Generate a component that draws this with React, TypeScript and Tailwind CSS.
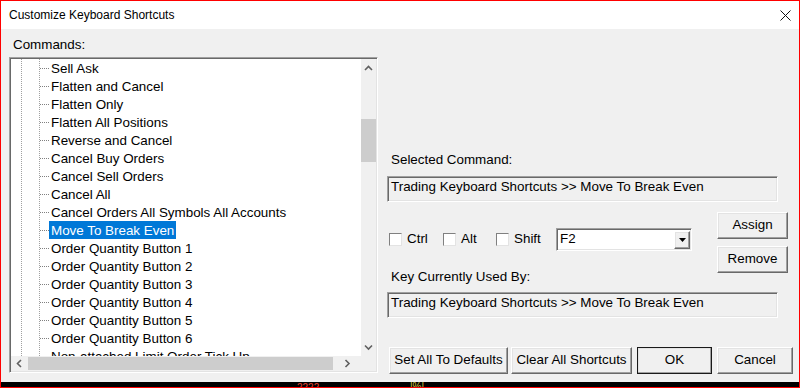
import React from "react";

const commands = [
  "Sell Ask",
  "Flatten and Cancel",
  "Flatten Only",
  "Flatten All Positions",
  "Reverse and Cancel",
  "Cancel Buy Orders",
  "Cancel Sell Orders",
  "Cancel All",
  "Cancel Orders All Symbols All Accounts",
  "Move To Break Even",
  "Order Quantity Button 1",
  "Order Quantity Button 2",
  "Order Quantity Button 3",
  "Order Quantity Button 4",
  "Order Quantity Button 5",
  "Order Quantity Button 6",
  "Non-attached Limit Order Tick Up",
];

const raised =
  "border border-t-white border-l-white border-r-[#696969] border-b-[#696969] shadow-[inset_-1px_-1px_0_#a0a0a0,inset_1px_1px_0_#e3e3e3] bg-[#f0f0f0]";
const sunken =
  "border border-t-[#a0a0a0] border-l-[#a0a0a0] border-r-white border-b-white shadow-[inset_1px_1px_0_#696969,inset_-1px_-1px_0_#e3e3e3]";

function Btn({ label, w, isDefault }: { label: string; w: string; isDefault?: boolean }) {
  return (
    <div className={`${w} h-[27px] ${isDefault ? "outline outline-1 outline-[#1a1a1a] -outline-offset-1" : ""} ${raised} flex items-center justify-center text-[13.4px] text-black`}>
      {label}
    </div>
  );
}

function Check({ label, w }: { label: string; w: string }) {
  return (
    <div className={`${w} flex items-center`}>
      <span className="w-[13px] h-[13px] bg-white border border-t-[#808080] border-l-[#808080] border-r-[#e3e3e3] border-b-[#e3e3e3]" />
      <span className="ml-[5px] text-[13.4px]">{label}</span>
    </div>
  );
}

function Chevron({ dir }: { dir: "up" | "down" | "left" | "right" }) {
  const d = {
    up: "M1 5 L4.5 1.5 L8 5",
    down: "M1 1.5 L4.5 5 L8 1.5",
    left: "M5 1 L1.5 4.5 L5 8",
    right: "M1.5 1 L5 4.5 L1.5 8",
  }[dir];
  const vertical = dir === "up" || dir === "down";
  return (
    <svg width={vertical ? 9 : 7} height={vertical ? 7 : 9} viewBox={vertical ? "0 0 9 7" : "0 0 7 9"}>
      <path d={d} fill="none" stroke="#606060" strokeWidth="1.6" />
    </svg>
  );
}

export default function App() {
  return (
    <div className="w-[800px] h-[388px] border border-[#ff0000] flex flex-col overflow-hidden font-['Liberation_Sans',Arial,sans-serif] text-black">
      <div className="h-[28px] bg-white flex items-center justify-between pl-[8px] pr-[8px]">
        <span className="text-[12px]">Customize Keyboard Shortcuts</span>
        <svg width="11" height="11" viewBox="0 0 11 11">
          <path d="M0.5 0.5 L10.5 10.5 M10.5 0.5 L0.5 10.5" stroke="#111" strokeWidth="1" />
        </svg>
      </div>

      <div className="flex-1 bg-[#f0f0f0] flex pl-[8px]">
        <div className="w-[369px] flex flex-col pt-[8px]">
          <div className="pl-[4px] h-[16px] leading-[16px] text-[13.4px]">Commands:</div>
          <div className={`mt-[4px] h-[316px] ${sunken} p-[1px] flex flex-col bg-white`}>
            <div className="flex flex-1 min-h-0">
              <div className="flex-1 overflow-hidden pl-[10px] bg-white">
                <div className="h-full border-l border-dotted border-[#a0a0a0] pl-[17px]">
                  <div className="h-full border-l border-dotted border-[#a0a0a0]">
                    {commands.map((c, i) => (
                      <div key={c} className="h-[18px] flex items-center">
                        <span className="w-[9px] border-t border-dotted border-[#808080]" />
                        <span
                          className={`h-[18px] leading-[19px] px-[2px] text-[13.4px] whitespace-nowrap ${i === 9 ? "bg-[#0078d7] text-white" : ""}`}
                        >
                          {c}
                        </span>
                      </div>
                    ))}
                  </div>
                </div>
              </div>
              <div className="w-[15px] bg-[#f0f0f0] flex flex-col">
                <div className="h-[18px] flex items-center justify-center"><Chevron dir="up" /></div>
                <div className="h-[42px]" />
                <div className="h-[43px] bg-[#cdcdcd]" />
                <div className="flex-1" />
                <div className="h-[18px] flex items-center justify-center"><Chevron dir="down" /></div>
              </div>
            </div>
            <div className="h-[15px] flex bg-[#f0f0f0]">
              <div className="w-[17px] flex items-center justify-center"><Chevron dir="left" /></div>
              <div className="w-[305px] my-[1px] bg-[#cdcdcd]" />
              <div className="flex-1 flex items-center justify-center"><Chevron dir="right" /></div>
              <div className="w-[15px]" />
            </div>
          </div>
        </div>

        <div className="w-[406px] ml-[9px] flex flex-col pt-[123px]">
          <div className="pl-[4px] h-[16px] leading-[16px] text-[13.4px]">Selected Command:</div>
          <div className={`mt-[8px] w-[391px] h-[26px] ${sunken} pl-[3px] pb-[3px] flex items-center text-[13.4px]`}>
            Trading Keyboard Shortcuts &gt;&gt; Move To Break Even
          </div>

          <div className="mt-[10px] flex">
            <div className="flex flex-col pt-[16px]">
              <div className="flex items-center h-[23px] pl-[2px]">
                <Check label="Ctrl" w="w-[54px]" />
                <Check label="Alt" w="w-[53px]" />
                <Check label="Shift" w="w-[60px]" />
                <div className={`w-[136px] h-[23px] ${sunken} bg-white flex items-center pl-[3px] pr-[1px]`}>
                  <span className="flex-1 text-[13.4px]">F2</span>
                  <div className={`w-[16px] h-[18px] ${raised} flex items-center justify-center`}>
                    <svg width="7" height="4" viewBox="0 0 7 4">
                      <path d="M0 0 H7 L3.5 4 Z" fill="#000" />
                    </svg>
                  </div>
                </div>
              </div>
              <div className="mt-[18px] pl-[4px] h-[16px] leading-[16px] text-[13.4px]">Key Currently Used By:</div>
            </div>
            <div className="ml-auto mr-[5px] flex flex-col gap-[7px]">
              <Btn label="Assign" w="w-[71px]" />
              <Btn label="Remove" w="w-[71px]" />
            </div>
          </div>

          <div className={`mt-[7px] w-[391px] h-[26px] ${sunken} pl-[3px] pb-[3px] flex items-center text-[13.4px]`}>
            Trading Keyboard Shortcuts &gt;&gt; Move To Break Even
          </div>

          <div className="mt-[29px] ml-[2px] flex">
            <Btn label="Set All To Defaults" w="w-[119px]" />
            <div className="ml-[3px]"><Btn label="Clear All Shortcuts" w="w-[121px]" /></div>
            <div className="ml-[5px]"><Btn label="OK" w="w-[75px]" isDefault /></div>
            <div className="ml-[5px]"><Btn label="Cancel" w="w-[76px]" /></div>
          </div>
        </div>
      </div>

      <div className="h-[5px] bg-black relative overflow-hidden">
        <span className="absolute left-[296px] top-[1px] text-[10px] leading-[10px] text-[#e04030]">2222</span>
        <span className="absolute left-[409px] top-[0px] text-[10px] leading-[10px] text-[#d0c040]">|%|</span>
      </div>
    </div>
  );
}
